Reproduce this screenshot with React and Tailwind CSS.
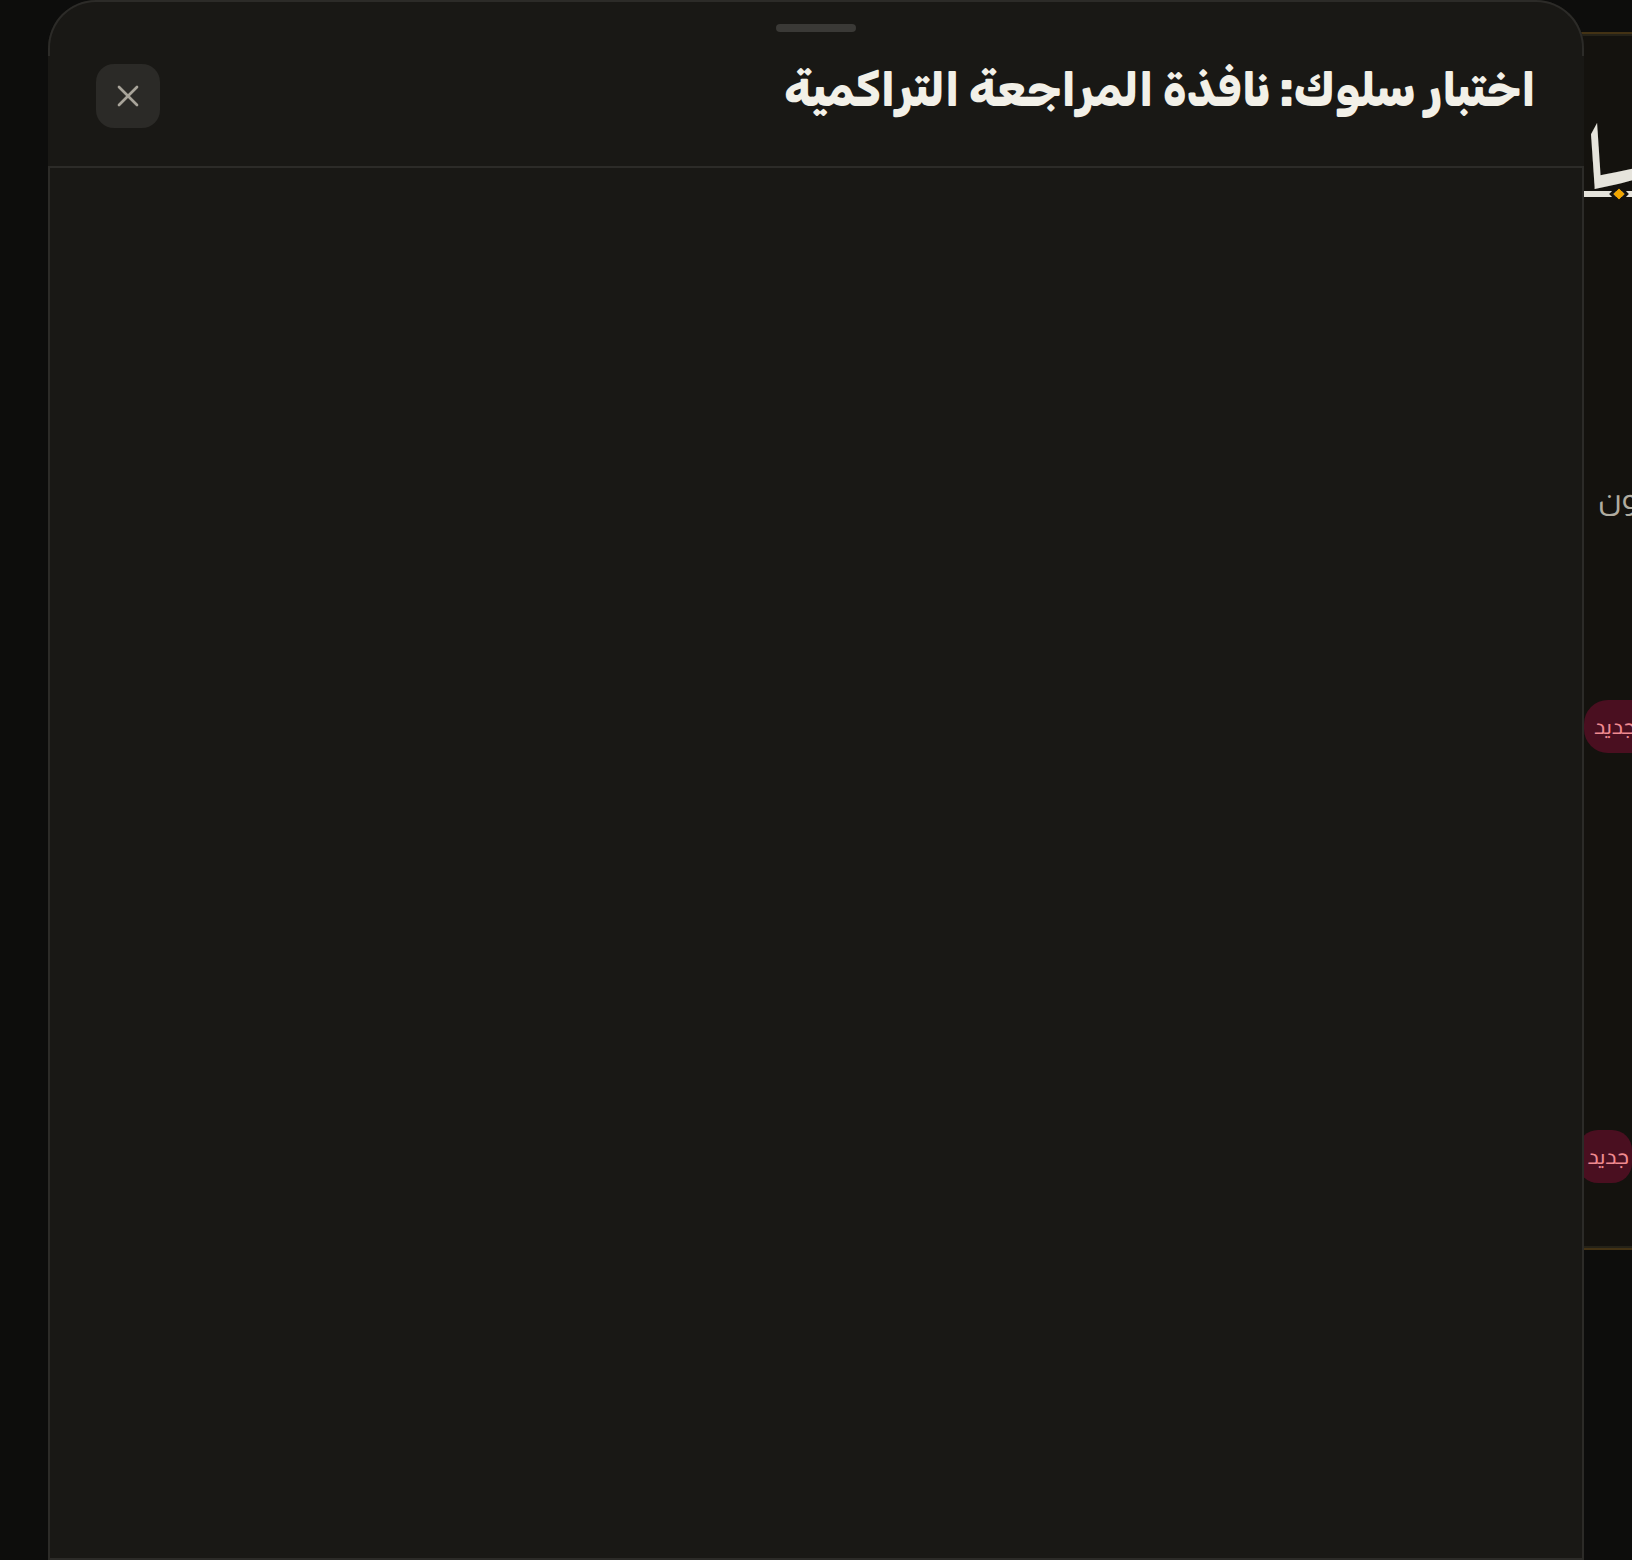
import { X } from "lucide-react";

export default function App() {
  return (
    <div dir="ltr" className="relative w-full h-[1560px] overflow-hidden bg-[#0d0d0c] font-['Almarai',sans-serif]">
      {/* page behind the sheet */}
      <div className="pt-[32px] pl-[80px]">
        <div className="h-[1218px] border-y-2 border-[#433214] bg-[#14120e]">
          <div className="h-full border-y-2 border-[#252218] pl-[1504px] overflow-hidden flex flex-col">
            <div dir="rtl" className="h-[96px] mt-[58px] w-max whitespace-nowrap leading-[96px] text-[96px] text-[#e6e4dc] font-['Aref_Ruqaa',serif]">
              سا
            </div>
            <div className="relative h-[6px] mt-[1px] w-[48px] bg-[#e6e4dc]">
              <div className="absolute left-[31px] top-[-1px] w-[8px] h-[8px] rotate-45 bg-[#f0a500] outline-[3px] outline-[#14120e]"></div>
            </div>
            <div dir="rtl" className="mt-[282px] ml-[14px] w-max h-[40px] leading-[40px] whitespace-nowrap text-[30px] text-[#b0aca0]">
              يكون
            </div>
            <div dir="rtl" className="mt-[181px] h-[53px] w-[120px] rounded-[24px] bg-[#4a0f20] text-[#f08a90] text-[22px] flex items-center pl-[10px] whitespace-nowrap">
              <span className="mr-auto">جديد</span>
            </div>
            <div dir="rtl" className="mt-[377px] -ml-[6px] h-[53px] w-[54px] rounded-[20px] bg-[#4a0f20] text-[#f08a90] text-[22px] flex items-center justify-start pr-[3px] whitespace-nowrap">
              جديد
            </div>
          </div>
        </div>
      </div>

      {/* sheet */}
      <div dir="rtl" className="absolute left-[48px] top-0 w-[1536px] h-[1560px] flex flex-col rounded-t-[48px] bg-[#191815]">
        <div className="absolute inset-x-0 top-0 h-[56px] border-2 border-b-0 border-[#2c2b28] rounded-t-[48px] pointer-events-none"></div>
        <div className="h-[166px] relative px-[48px]">
          <div className="absolute left-[728px] top-[24px] w-[80px] h-[8px] rounded-full bg-[#3a3936]"></div>
          <div className="flex items-center justify-between pt-[64px]">
            <h2 className="text-[46.3px] leading-[50px] font-extrabold font-['Rubik',sans-serif] text-[#f2f0e8] -mt-[11px]">
              اختبار سلوك: نافذة المراجعة التراكمية
            </h2>
            <button className="w-[64px] h-[64px] rounded-[18px] bg-[#2b2a27] flex items-center justify-center text-[#a8a49a]">
              <X className="w-[36px] h-[36px]" strokeWidth={1.8} />
            </button>
          </div>
        </div>
        <div className="flex-1 border-2 border-[#2c2b28]"></div>
      </div>
    </div>
  );
}
